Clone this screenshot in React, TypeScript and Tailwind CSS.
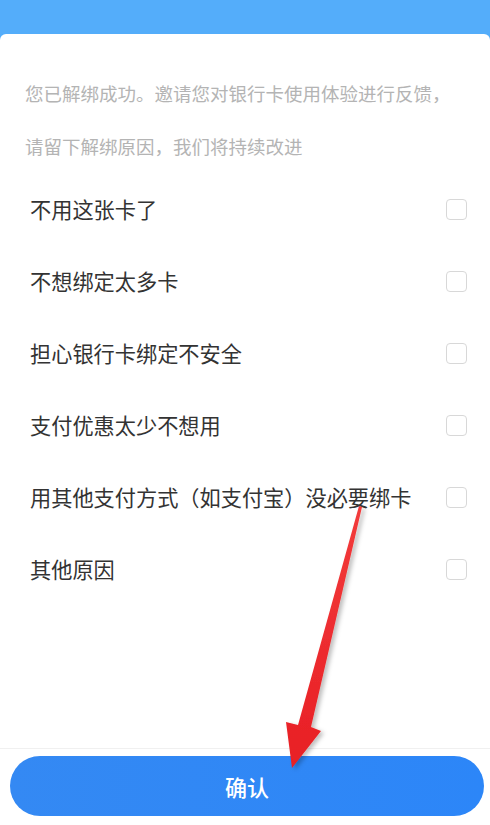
const reasons = [
  "不用这张卡了",
  "不想绑定太多卡",
  "担心银行卡绑定不安全",
  "支付优惠太少不想用",
  "用其他支付方式（如支付宝）没必要绑卡",
  "其他原因",
];

const App = () => {
  return (
    <div
      className="relative flex h-[825px] w-full flex-col overflow-hidden bg-[#54adfa]"
      style={{ fontFamily: '"Noto Sans CJK SC", "Noto Sans", sans-serif' }}
    >
      <div className="h-[34px] shrink-0" />
      <div className="flex flex-1 flex-col rounded-t-[6px] bg-white">
        {/* intro */}
        <div className="px-[25px] pt-[33px] text-[18.5px] leading-[53px] text-[#b4b4b4]">
          <p>您已解绑成功。邀请您对银行卡使用体验进行反馈，</p>
          <p>请留下解绑原因，我们将持续改进</p>
        </div>

        {/* reasons */}
        <div className="flex flex-col">
          {reasons.map((r) => (
            <label key={r} className="flex h-[72px] items-center justify-between pl-[30px] pr-[23px]">
              <span className="text-[21.2px] text-[#333333]">{r}</span>
              <span className="h-[21px] w-[21px] rounded-[4px] border-[1.5px] border-[#d8d8d8] bg-white" />
            </label>
          ))}
        </div>

        <div className="flex-1" />

        <div className="border-t border-[#f0f0f0] pb-[9px] pl-[10px] pr-[6px] pt-[7px]">
          <button
            type="button"
            className="flex h-[60px] w-full items-center justify-center rounded-full bg-gradient-to-r from-[#3489f3] to-[#2c86f8] text-[22px] font-medium text-white"
          >
            确认
          </button>
        </div>
      </div>

      {/* red annotation arrow */}
      <svg className="pointer-events-none absolute inset-0" width="490" height="825" viewBox="0 0 490 825">
        <defs>
          <linearGradient id="arrowRed" x1="0" y1="0" x2="0" y2="1">
            <stop offset="0" stopColor="#f23b3b" />
            <stop offset="1" stopColor="#e81f25" />
          </linearGradient>
          <filter id="arrowShadow" x="-50%" y="-10%" width="200%" height="120%">
            <feDropShadow dx="3" dy="2" stdDeviation="2" floodColor="#000" floodOpacity="0.25" />
          </filter>
        </defs>
        <polygon
          points="359,506 362,507 311,727 321,731 292,768 286,722 298,725"
          fill="url(#arrowRed)"
          filter="url(#arrowShadow)"
        />
      </svg>
    </div>
  );
};

export default App;
